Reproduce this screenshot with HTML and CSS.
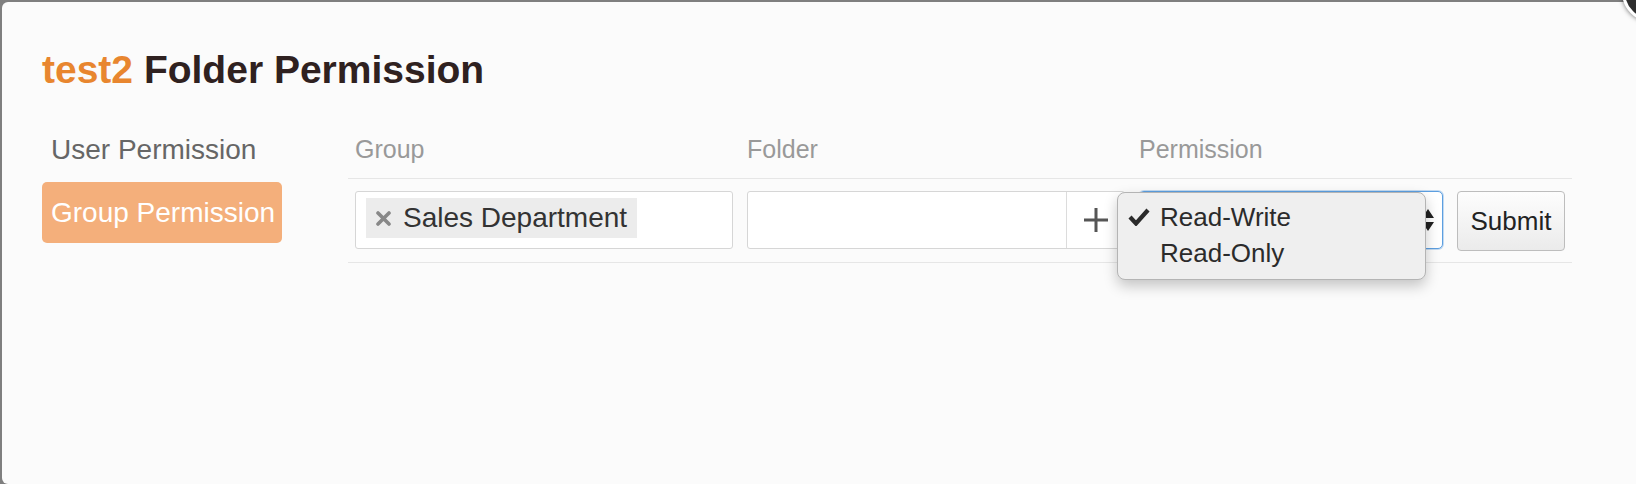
FILE: index.html
```html
<!DOCTYPE html>
<html lang="en">
<head>
    <meta charset="UTF-8">
    <meta name="viewport" content="width=device-width, initial-scale=1.0">
    <title>test2 Folder Permission</title>
    <link rel="stylesheet" href="styles.css">
</head>
<body>
    <div class="modal">
        <span class="close-button"></span>

        <h1><span class="folder-name">test2</span> Folder Permission</h1>

        <div class="layout">
            <div class="side-nav">
                <div class="nav-item">User Permission</div>
                <div class="nav-item active">Group Permission</div>
            </div>

            <div class="perm-table">
                <div class="perm-row perm-head">
                    <div class="cell">Group</div>
                    <div class="cell">Folder</div>
                    <div class="cell">Permission</div>
                    <div class="cell"></div>
                </div>
                <div class="perm-row">
                    <div class="cell">
                        <div class="tag-input">
                            <span class="tag">
                                <svg class="tag-remove" width="15" height="15" viewBox="0 0 15 15">
                                    <path d="M2 2 L13 13 M13 2 L2 13" stroke="#888" stroke-width="3.6" stroke-linecap="round"/>
                                </svg>
                                Sales Department
                            </span>
                        </div>
                    </div>
                    <div class="cell">
                        <div class="input-group">
                            <div class="input-field"></div>
                            <div class="input-addon">
                                <svg width="26" height="26" viewBox="0 0 26 26">
                                    <path d="M13 1 V25 M1 13 H25" stroke="#555" stroke-width="3"/>
                                </svg>
                            </div>
                        </div>
                    </div>
                    <div class="cell">
                        <div class="select-box">
                            <svg class="select-arrows" width="12" height="22" viewBox="0 0 12 22">
                                <path d="M0 9 L6 0 L12 9 Z M0 13 L6 22 L12 13 Z" fill="#222"/>
                            </svg>
                            <!-- open option list -->
                            <div class="dropdown">
                                <div class="option">
                                    <svg class="check" width="22" height="18" viewBox="0 0 22 18">
                                        <path d="M2 9 L8 15.5 L20 2" fill="none" stroke="#2b2b2b" stroke-width="4.2" stroke-linejoin="miter"/>
                                    </svg>
                                    Read-Write
                                </div>
                                <div class="option">Read-Only</div>
                            </div>
                        </div>
                    </div>
                    <div class="cell">
                        <button class="submit-button">Submit</button>
                    </div>
                </div>
            </div>
        </div>
    </div>
</body>
</html>
```

FILE: styles.css
```css
html, body {
    margin: 0;
    padding: 0;
    height: 100%;
    overflow: hidden;
}
body {
    background-color: #7f7f7f;
    font-family: "Liberation Sans", Arial, sans-serif;
    color: #333;
}
.modal {
    position: relative;
    margin: 2px 0 0 2px;
    height: 482px;
    padding-left: 40px;
    background-color: #fbfbfb;
    border-radius: 6px 0 0 6px;
}
.close-button {
    position: absolute;
    top: -40px;
    left: 1620px;
    width: 54px;
    height: 54px;
    border: 3px solid #fff;
    border-radius: 50%;
    background-color: #2e2e2e;
    box-shadow: 0 0 5px rgba(0, 0, 0, 0.6);
}
h1 {
    margin: 0;
    padding-top: 45px;
    font-size: 39px;
    line-height: 45px;
    font-weight: bold;
    color: #2f2120;
}
.folder-name {
    color: #e8862f;
}
.layout {
    display: flex;
    margin-top: 27px;
}
.side-nav {
    width: 240px;
    margin-right: 66px;
}
.nav-item {
    height: 61px;
    line-height: 61px;
    padding: 0 9px;
    font-size: 28px;
    color: #666;
    border-radius: 5px;
    margin-bottom: 2px;
    white-space: nowrap;
}
.nav-item.active {
    background-color: #f4af7b;
    color: #fff;
}
.perm-table {
    width: 1224px;
}
.perm-row {
    display: grid;
    grid-template-columns: 392px 392px 318px 122px;
    border-bottom: 1px solid #e6e6e6;
    padding: 12px 0 11px;
}
.perm-row .cell {
    padding: 0 7px;
}
.perm-head {
    padding: 15px 0 14px;
}
.perm-head .cell {
    font-size: 25px;
    line-height: 30px;
    color: #999;
}
.tag-input {
    height: 56px;
    border: 1px solid #d6d6d6;
    border-radius: 3px;
    background-color: #fff;
}
.tag {
    display: inline-flex;
    align-items: center;
    height: 40px;
    margin: 6px 0 0 10px;
    padding: 0 10px;
    background-color: #ececec;
    font-size: 28px;
    color: #333;
}
.tag-remove {
    margin-right: 12px;
}
.input-group {
    display: flex;
    height: 56px;
    border: 1px solid #d6d6d6;
    border-radius: 3px;
    background-color: #fff;
}
.input-field {
    flex: 1;
}
.input-addon {
    width: 57px;
    border-left: 1px solid #dcdcdc;
    display: flex;
    align-items: center;
    justify-content: center;
}
.select-box {
    position: relative;
    height: 56px;
    border: 1px solid #5d9fe0;
    border-radius: 5px;
    background-color: #fff;
    box-shadow: 0 0 0 1px rgba(93, 159, 224, 0.35);
}
.select-arrows {
    position: absolute;
    right: 8px;
    top: 17px;
}
.dropdown {
    position: absolute;
    top: 0;
    left: -23px;
    width: 309px;
    height: 88px;
    padding-top: 6px;
    box-sizing: border-box;
    background-color: #efefef;
    border: 1px solid #b4b4b4;
    border-radius: 8px;
    box-shadow: 0 6px 14px rgba(0, 0, 0, 0.22);
    z-index: 2;
}
.option {
    position: relative;
    padding-left: 42px;
    font-size: 26px;
    line-height: 36px;
    color: #2b2b2b;
}
.check {
    position: absolute;
    left: 10px;
    top: 9px;
}
.submit-button {
    display: block;
    width: 108px;
    height: 60px;
    padding: 0;
    border: 1px solid #bdbdbd;
    border-radius: 4px;
    background: linear-gradient(#fdfdfd, #ebebeb);
    font-family: "Liberation Sans", Arial, sans-serif;
    font-size: 26px;
    color: #222;
}
```
